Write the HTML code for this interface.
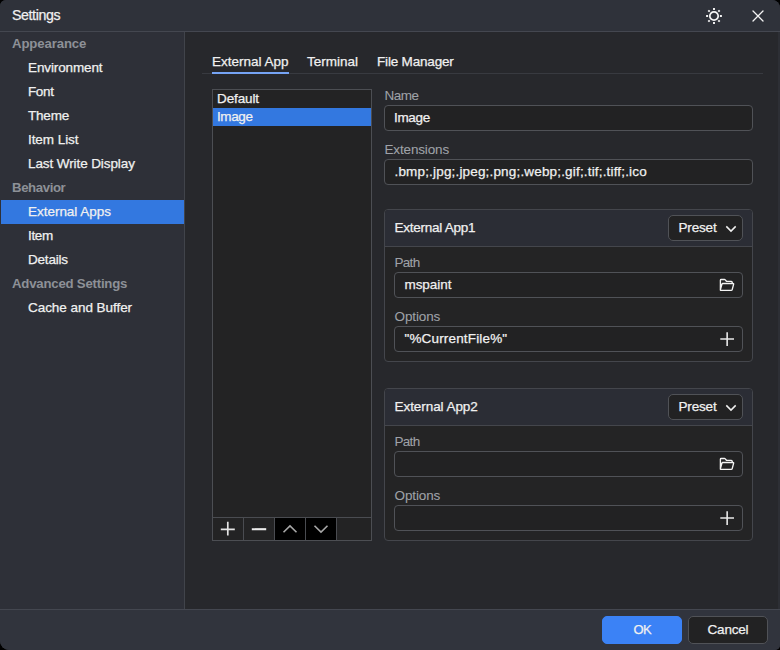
<!DOCTYPE html>
<html><head><meta charset="utf-8"><title>Settings</title>
<style>
*{box-sizing:border-box;margin:0;padding:0}
html,body{width:780px;height:650px;overflow:hidden;background:#000}
body{font-family:"Liberation Sans",sans-serif;font-size:13.5px;color:#f0f0f0;position:relative}
#win{position:absolute;left:0;top:0;width:780px;height:650px;background:#2f323b;border-radius:6px 8px 5px 9px;overflow:hidden}
#title{position:absolute;left:0;top:0;width:780px;height:32px;border-bottom:1px solid #444750;background:#2f323a}
#side{position:absolute;left:0;top:32px;width:185px;height:577px;border-right:1px solid #41444b;background:#2e3038}
#main{position:absolute;left:185px;top:32px;width:595px;height:577px;background:#27282c}
#foot{position:absolute;left:0;top:609px;width:780px;height:41px;border-top:1px solid #444750;background:#31343d}
.abs{position:absolute}
.t{position:absolute;white-space:nowrap;line-height:16px;height:16px;-webkit-text-stroke:0.25px currentColor}
.si{left:28px}
.sg{left:12px;font-weight:bold;color:#8d9097;font-size:13.2px;-webkit-text-stroke:0}
.lbl{color:#9fa2a8;-webkit-text-stroke:0.08px currentColor}
.inp{position:absolute;height:26px;border:1px solid #505257;border-radius:4px;background:#222223}
.grp{position:absolute;left:384px;width:369px;height:153px;border:1px solid #44464c;border-radius:4px;background:#242425;overflow:hidden}
.grp .hd{position:absolute;left:0;top:0;width:100%;height:37px;background:#2b2d35;border-bottom:1px solid #44464c}
.btn{position:absolute;border:1px solid #505257;border-radius:5px;background:#222223}
svg{position:absolute;overflow:visible}
#t_settings{letter-spacing:-0.395px}
#s0{letter-spacing:-0.122px}
#s1{letter-spacing:-0.120px}
#s2{letter-spacing:-0.372px}
#s3{letter-spacing:-0.208px}
#s4{letter-spacing:-0.064px}
#s5{letter-spacing:-0.097px}
#s6{letter-spacing:-0.391px}
#s7{letter-spacing:-0.026px}
#s8{letter-spacing:-0.322px}
#s9{letter-spacing:-0.211px}
#s10{letter-spacing:-0.207px}
#s11{letter-spacing:-0.049px}
#tab0{letter-spacing:-0.015px}
#tab1{letter-spacing:-0.002px}
#tab2{letter-spacing:-0.182px}
#l0{letter-spacing:-0.114px}
#l1{letter-spacing:-0.408px}
#f_name{letter-spacing:-0.539px}
#v_name{letter-spacing:-0.333px}
#f_ext{letter-spacing:-0.150px}
#v_ext{letter-spacing:0.170px}
#g1{letter-spacing:-0.247px}
#p1{letter-spacing:-0.166px}
#f_p1{letter-spacing:-0.694px}
#v_p1{letter-spacing:-0.064px}
#f_o1{letter-spacing:-0.122px}
#v_o1{letter-spacing:0.159px}
#g2{letter-spacing:-0.064px}
#p2{letter-spacing:-0.166px}
#f_p2{letter-spacing:-0.694px}
#f_o2{letter-spacing:-0.122px}
#b_ok{letter-spacing:-0.700px}
#b_cancel{letter-spacing:-0.186px}
</style></head><body>
<div id="win">
<div id="title">
<svg style="left:705px;top:7px" width="18" height="18" viewBox="-9 -9 18 18" fill="none" stroke="#f4f4f4"><circle cx="0" cy="0" r="4.200" stroke-width="1.7"/><path stroke-width="1.9" d="M0-5.900V-7.900M0 5.900V7.900M-5.900 0H-7.900M5.900 0H7.900M-4.300-4.300L-5.700-5.700M4.300 4.300L5.700 5.700M-4.300 4.300L-5.700 5.700M4.300-4.300L5.700-5.700"/></svg>
<svg style="left:752px;top:10px" width="12" height="12" viewBox="0 0 12 12" fill="none" stroke="#f4f4f4" stroke-width="1.3" stroke-linecap="round"><path d="M1 1L11 11M11 1L1 11"/></svg>
</div>
<div id="side"></div>
<div class="abs" style="left:1px;top:200px;width:183px;height:24px;background:#3378e0"></div>
<span class="t" id="t_settings" style="left:12px;top:7px;font-size:14.200px">Settings</span>
<span class="t sg" id="s0" style="top:36px">Appearance</span>
<span class="t si" id="s1" style="top:60px">Environment</span>
<span class="t si" id="s2" style="top:84px">Font</span>
<span class="t si" id="s3" style="top:108px">Theme</span>
<span class="t si" id="s4" style="top:132px">Item List</span>
<span class="t si" id="s5" style="top:156px">Last Write Display</span>
<span class="t sg" id="s6" style="top:180px">Behavior</span>
<span class="t si" id="s7" style="top:204px">External Apps</span>
<span class="t si" id="s8" style="top:228px">Item</span>
<span class="t si" id="s9" style="top:252px">Details</span>
<span class="t sg" id="s10" style="top:276px">Advanced Settings</span>
<span class="t si" id="s11" style="top:300px">Cache and Buffer</span>
<div id="main"></div>
<div class="abs" style="left:778px;top:32px;width:2px;height:577px;background:#2d2f35"></div>
<!-- tabs -->
<span class="t" id="tab0" style="left:212px;top:54px">External App</span>
<span class="t" id="tab1" style="left:307px;top:54px">Terminal</span>
<span class="t" id="tab2" style="left:377px;top:54px">File Manager</span>
<div class="abs" style="left:202px;top:73px;width:561px;height:1px;background:#383a40"></div>
<div class="abs" style="left:212px;top:72px;width:77px;height:2px;background:#76a4f5"></div>
<!-- list -->
<div class="abs" style="left:212px;top:89px;width:160px;height:452px;border:1px solid #4c4e53;background:#232324"></div>
<div class="abs" style="left:213px;top:108px;width:158px;height:18px;background:#3378e0"></div>
<span class="t" id="l0" style="left:217px;top:91px">Default</span>
<span class="t" id="l1" style="left:217px;top:109px">Image</span>
<div class="abs" style="left:213px;top:517px;width:158px;height:1px;background:#4a4c51"></div>
<div class="abs" style="left:275px;top:518px;width:61px;height:22px;background:#000"></div>
<div class="abs" style="left:243px;top:518px;width:1px;height:22px;background:#4a4c51"></div>
<div class="abs" style="left:274px;top:518px;width:1px;height:22px;background:#4a4c51"></div>
<div class="abs" style="left:305px;top:518px;width:1px;height:22px;background:#4a4c51"></div>
<div class="abs" style="left:336px;top:518px;width:1px;height:22px;background:#4a4c51"></div>
<svg style="left:220px;top:522px" width="15" height="15" viewBox="0 0 15 15" fill="none" stroke="#e4e4e4" stroke-width="1.7"><path d="M7.800 -.3v13.900M.8 7.300h14"/></svg>
<svg style="left:251px;top:522px" width="15" height="15" viewBox="0 0 15 15" fill="none" stroke="#ececec" stroke-width="2.1"><path d="M.8 7.200h14.400"/></svg>
<svg style="left:283px;top:525px" width="14" height="8" viewBox="0 0 14 8" fill="none" stroke="#a8a8a8" stroke-width="1.6"><path d="M.5 7.200L7 .9l6.500 6.300"/></svg>
<svg style="left:314px;top:525px" width="14" height="8" viewBox="0 0 14 8" fill="none" stroke="#a8a8a8" stroke-width="1.6"><path d="M.5 .8L7 7.100l6.500-6.300"/></svg>
<!-- right form -->
<span class="t lbl" id="f_name" style="left:384.500px;top:88px">Name</span>
<div class="inp" style="left:384px;top:105px;width:369px"></div>
<span class="t" id="v_name" style="left:394px;top:110px">Image</span>
<span class="t lbl" id="f_ext" style="left:384.500px;top:142px">Extensions</span>
<div class="inp" style="left:384px;top:159px;width:369px"></div>
<span class="t" id="v_ext" style="left:394.500px;top:164px">.bmp;.jpg;.jpeg;.png;.webp;.gif;.tif;.tiff;.ico</span>

<div class="grp" style="top:209px"><div class="hd"></div></div>
<span class="t" id="g1" style="left:394.500px;top:220px">External App1</span>
<div class="btn" style="left:668px;top:215px;width:75px;height:26px"></div>
<span class="t" id="p1" style="left:678.500px;top:220px">Preset</span>
<svg style="left:725.500px;top:225.500px" width="10" height="6" viewBox="0 0 10 6" fill="none" stroke="#f0f0f0" stroke-width="1.5"><path d="M.3 .4L5 5.100 9.700 .4"/></svg>
<span class="t lbl" id="f_p1" style="left:394.500px;top:255px">Path</span>
<div class="inp" style="left:394px;top:272px;width:349px"></div>
<span class="t" id="v_p1" style="left:404.500px;top:277px">mspaint</span>
<span class="t lbl" id="f_o1" style="left:394.500px;top:309px">Options</span>
<div class="inp" style="left:394px;top:326px;width:349px"></div>
<span class="t" id="v_o1" style="left:404.500px;top:331px">"%CurrentFile%"</span>
<svg class="fold" style="left:719px;top:278px" width="16" height="14" viewBox="0 0 16 14" fill="none" stroke="#f4f4f4" stroke-width="1.35" stroke-linejoin="round"><path d="M1.400 11.800V2.300q0-.8.800-.8h3.300q.5 0 .8.400l.9 1.100q.3.400.8.400h4.300q.9 0 .9.900v1.200M3.700 5.500h10.300q.8 0 .6.800l-1.400 5.300q-.2.800-1 .8H2q-.9 0-.6-.9l1.500-5.200q.2-.8.800-.8z"/></svg>
<svg style="left:719.500px;top:331.500px" width="15" height="15" viewBox="0 0 15 15" fill="none" stroke="#e8e8e8" stroke-width="1.6"><path d="M7.150 .2v13.700M.3 7h13.700"/></svg>

<div class="grp" style="top:388px"><div class="hd"></div></div>
<span class="t" id="g2" style="left:394.500px;top:399px">External App2</span>
<div class="btn" style="left:668px;top:394px;width:75px;height:26px"></div>
<span class="t" id="p2" style="left:678.500px;top:399px">Preset</span>
<svg style="left:725.500px;top:404.500px" width="10" height="6" viewBox="0 0 10 6" fill="none" stroke="#f0f0f0" stroke-width="1.5"><path d="M.3 .4L5 5.100 9.700 .4"/></svg>
<span class="t lbl" id="f_p2" style="left:394.500px;top:434px">Path</span>
<div class="inp" style="left:394px;top:451px;width:349px"></div>
<span class="t lbl" id="f_o2" style="left:394.500px;top:488px">Options</span>
<div class="inp" style="left:394px;top:505px;width:349px"></div>
<svg class="fold" style="left:719px;top:457px" width="16" height="14" viewBox="0 0 16 14" fill="none" stroke="#f4f4f4" stroke-width="1.35" stroke-linejoin="round"><path d="M1.400 11.800V2.300q0-.8.800-.8h3.300q.5 0 .8.400l.9 1.100q.3.400.8.400h4.300q.9 0 .9.900v1.200M3.700 5.500h10.300q.8 0 .6.800l-1.400 5.300q-.2.800-1 .8H2q-.9 0-.6-.9l1.500-5.200q.2-.8.800-.8z"/></svg>
<svg style="left:719.500px;top:510.500px" width="15" height="15" viewBox="0 0 15 15" fill="none" stroke="#e8e8e8" stroke-width="1.6"><path d="M7.150 .2v13.700M.3 7h13.700"/></svg>

<div id="foot"></div>
<div class="btn" style="left:602px;top:616px;width:80px;height:28px;background:#3b82f6;border-color:#3b82f6"></div>
<div class="btn" style="left:688px;top:616px;width:80px;height:28px"></div>
<span class="t" id="b_ok" style="left:633.500px;top:622px;font-size:13px">OK</span>
<span class="t" id="b_cancel" style="left:707.500px;top:622px">Cancel</span>
</div>
</body></html>
